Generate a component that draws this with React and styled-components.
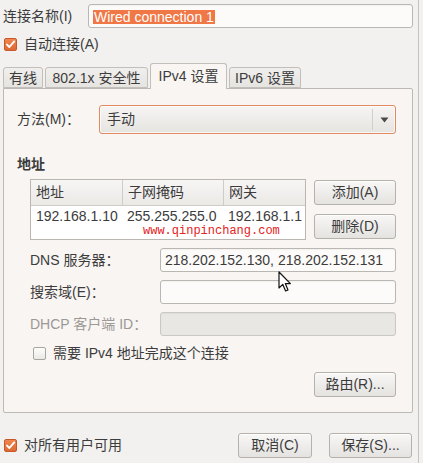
import React from 'react';
import styled, { createGlobalStyle } from 'styled-components';

const Global = createGlobalStyle`
  html, body { margin: 0; padding: 0; }
  body {
    background: #f2f1f0;
    font-family: "Liberation Sans", "Noto Sans CJK SC", sans-serif;
    font-size: 14px;
    line-height: 17px;
    color: #3c3c3c;
  }
`;

const Window = styled.div`
  position: relative;
  width: 419px;
  height: 463px;
  box-sizing: border-box;
  border-right: 1px solid #c6c3bf;
  background: #f2f1f0;
  display: flex;
  flex-direction: column;
`;

const NameRow = styled.div`
  display: flex;
  align-items: center;
  padding: 4px 5px 0 3px;
`;

const Label = styled.span`
  width: ${p => p.$w || 'auto'};
  flex: none;
  white-space: nowrap;
  color: ${p => (p.$disabled ? '#9c9995' : '#3c3c3c')};
`;

const Entry = styled.div`
  flex: 1;
  height: 24px;
  box-sizing: border-box;
  border: 1px solid #bab7b2;
  border-radius: 3px;
  background: ${p => (p.$disabled ? '#e9e7e4' : '#fcfbfa')};
  border-color: ${p => (p.$disabled ? '#cbc8c3' : '#bab7b2')};
  box-shadow: inset 0 1px 1px rgba(0, 0, 0, 0.04);
  display: flex;
  align-items: center;
  padding: 0 4px;
  white-space: nowrap;
  overflow: hidden;
`;

const Selected = styled.span`
  background: #f07746;
  color: #fff;
  padding: 0 1px;
  line-height: 14px;
  margin-top: 1px;
`;

const CheckRow = styled.label`
  display: flex;
  align-items: center;
  gap: 7px;
  margin: ${p => p.$m || '0'};
`;

const Box = styled.span`
  width: 13px;
  height: 13px;
  box-sizing: border-box;
  border-radius: 2px;
  flex: none;
  display: flex;
  align-items: center;
  justify-content: center;
  border: 1px solid ${p => (p.$on ? '#c5592a' : '#a9a6a1')};
  background: ${p => (p.$on ? 'linear-gradient(#f0854f, #de6a35)' : 'linear-gradient(#fdfdfc, #ebe9e6)')};
`;

const Check = ({ on }) => (
  <Box $on={on}>
    {on && (
      <svg width="11" height="11" viewBox="0 0 11 11">
        <path d="M2 5.6 L4.4 8 L9.2 2.4" fill="none" stroke="#fff" strokeWidth="1.9" strokeLinecap="round" strokeLinejoin="round" />
      </svg>
    )}
  </Box>
);

const Tabs = styled.div`
  display: flex;
  align-items: flex-end;
  gap: 2px;
  padding-left: 3px;
  margin-top: 10px;
  height: 25px;
  position: relative;
  z-index: 1;
`;

const Tab = styled.div`
  width: ${p => p.$w}px;
  height: ${p => (p.$active ? 26 : 21)}px;
  margin-bottom: ${p => (p.$active ? -1 : 0)}px;
  box-sizing: border-box;
  display: flex;
  align-items: center;
  justify-content: center;
  border: 1px solid #c2beb9;
  border-bottom: ${p => (p.$active ? 'none' : '1px solid #c2beb9')};
  border-radius: 3px 3px 0 0;
  background: ${p => (p.$active ? '#f8f5f3' : 'linear-gradient(#f1efed, #e6e4e1)')};
  white-space: nowrap;
  padding-top: ${p => (p.$active ? 0 : 1)}px;
`;

const Panel = styled.div`
  margin-left: 3px;
  width: 410px;
  height: 325px;
  box-sizing: border-box;
  border: 1px solid #bdb9b4;
  border-radius: 0 2px 2px 2px;
  background: #f8f5f3;
  padding: 16px 16px 0 13px;
  display: flex;
  flex-direction: column;
`;

const MethodRow = styled.div`
  display: flex;
  align-items: center;
`;

const Combo = styled.div`
  flex: 1;
  height: 29px;
  box-sizing: border-box;
  border: 1px solid #e48a62;
  border-radius: 3px;
  background: linear-gradient(#f6f5f3, #e6e4e1);
  box-shadow: inset 0 0 0 1px rgba(255, 255, 255, 0.7);
  display: flex;
  align-items: center;
`;

const ComboText = styled.span`
  flex: 1;
  padding-left: 7px;
`;

const ComboArrow = styled.span`
  width: 22px;
  height: 21px;
  border-left: 1px solid #d2cfca;
  display: flex;
  align-items: center;
  justify-content: center;
`;

const Heading = styled.div`
  font-weight: bold;
  margin-top: 21px;
  line-height: 18px;
`;

const AddrBlock = styled.div`
  display: flex;
  gap: 8px;
  margin: 6px 0 0 13px;
`;

const Table = styled.div`
  position: relative;
  width: 278px;
  height: 61px;
  box-sizing: border-box;
  border: 1px solid #bab7b2;
  background: #fff;
  display: grid;
  grid-template-columns: 91px 101px 1fr;
  grid-template-rows: 26px 1fr;
`;

const HeadCell = styled.div`
  display: flex;
  align-items: center;
  padding-left: 5px;
  background: linear-gradient(#f7f6f5, #ebe9e6);
  border-bottom: 1px solid #cfccc7;
  border-left: ${p => (p.$first ? 'none' : '1px solid #cfccc7')};
`;

const Cell = styled.div`
  padding: 3px 0 0 5px;
  line-height: 15px;
  white-space: nowrap;
`;

const Watermark = styled.span`
  position: absolute;
  left: 112px;
  top: 45px;
  font-family: "Liberation Mono", monospace;
  font-size: 12px;
  line-height: 12px;
  color: #e3221d;
  white-space: nowrap;
`;

const BtnCol = styled.div`
  display: flex;
  flex-direction: column;
  gap: 9px;
  padding-top: 1px;
`;

const Button = styled.button`
  width: ${p => p.$w || 82}px;
  height: 25px;
  box-sizing: border-box;
  border: 1px solid #b5b1ab;
  border-radius: 3px;
  background: linear-gradient(#f8f7f6, #e5e3e0);
  box-shadow: inset 0 1px 0 rgba(255, 255, 255, 0.8);
  font: inherit;
  color: #3c3c3c;
  padding: 0;
  align-self: ${p => p.$self || 'auto'};
  margin-top: ${p => p.$mt || 0}px;
`;

const Form = styled.div`
  display: grid;
  grid-template-columns: 130px 236px;
  grid-auto-rows: 24px;
  row-gap: 8px;
  align-items: center;
  margin: 8px 0 0 13px;
`;

const Footer = styled.div`
  display: flex;
  align-items: center;
  margin-top: 20px;
  padding: 0 6px 0 4px;
`;

const Spacer = styled.div`
  flex: 1;
`;

const FooterButtons = styled.div`
  display: flex;
  gap: 17px;
`;

const Cursor = styled.svg`
  position: absolute;
  left: 278px;
  top: 271px;
`;

export default function App() {
  return (
    <>
      <Global />
      <Window>
        <NameRow>
          <Label $w="85px">连接名称(I)</Label>
          <Entry>
            <Selected>Wired connection 1</Selected>
          </Entry>
        </NameRow>
        <CheckRow $m="8px 0 0 4px">
          <Check on />
          <span>自动连接(A)</span>
        </CheckRow>
        <Tabs>
          <Tab $w={40}>有线</Tab>
          <Tab $w={103}>802.1x 安全性</Tab>
          <Tab $w={77} $active>IPv4 设置</Tab>
          <Tab $w={72}>IPv6 设置</Tab>
        </Tabs>
        <Panel>
          <MethodRow>
            <Label $w="82px">方法(M)：</Label>
            <Combo>
              <ComboText>手动</ComboText>
              <ComboArrow>
                <svg width="9" height="6" viewBox="0 0 9 6">
                  <path d="M0.5 0.5 H8.5 L4.5 5.5 Z" fill="#4a4a4a" />
                </svg>
              </ComboArrow>
            </Combo>
          </MethodRow>
          <Heading>地址</Heading>
          <AddrBlock>
            <Table>
              <HeadCell $first>地址</HeadCell>
              <HeadCell>子网掩码</HeadCell>
              <HeadCell>网关</HeadCell>
              <Cell>192.168.1.10</Cell>
              <Cell>255.255.255.0</Cell>
              <Cell>192.168.1.1</Cell>
              <Watermark>www.qinpinchang.com</Watermark>
            </Table>
            <BtnCol>
              <Button>添加(A)</Button>
              <Button>删除(D)</Button>
            </BtnCol>
          </AddrBlock>
          <Form>
            <Label>DNS 服务器：</Label>
            <Entry>218.202.152.130, 218.202.152.131</Entry>
            <Label>搜索域(E)：</Label>
            <Entry />
            <Label $disabled>DHCP 客户端 ID：</Label>
            <Entry $disabled />
          </Form>
          <CheckRow $m="9px 0 0 16px">
            <Check />
            <span>需要 IPv4 地址完成这个连接</span>
          </CheckRow>
          <Button $self="flex-end" $mt={10}>路由(R)...</Button>
        </Panel>
        <Footer>
          <CheckRow>
            <Check on />
            <span>对所有用户可用</span>
          </CheckRow>
          <Spacer />
          <FooterButtons>
            <Button $w={74}>取消(C)</Button>
            <Button $w={83}>保存(S)...</Button>
          </FooterButtons>
        </Footer>
        <Cursor width="14" height="22" viewBox="0 0 14 22">
          <path d="M1 1 L1 17 L4.8 13.4 L7.6 20 L10 19 L7.3 12.6 L12.4 12.6 Z" fill="#fff" stroke="#111" strokeWidth="1.2" strokeLinejoin="round" />
        </Cursor>
      </Window>
    </>
  );
}
